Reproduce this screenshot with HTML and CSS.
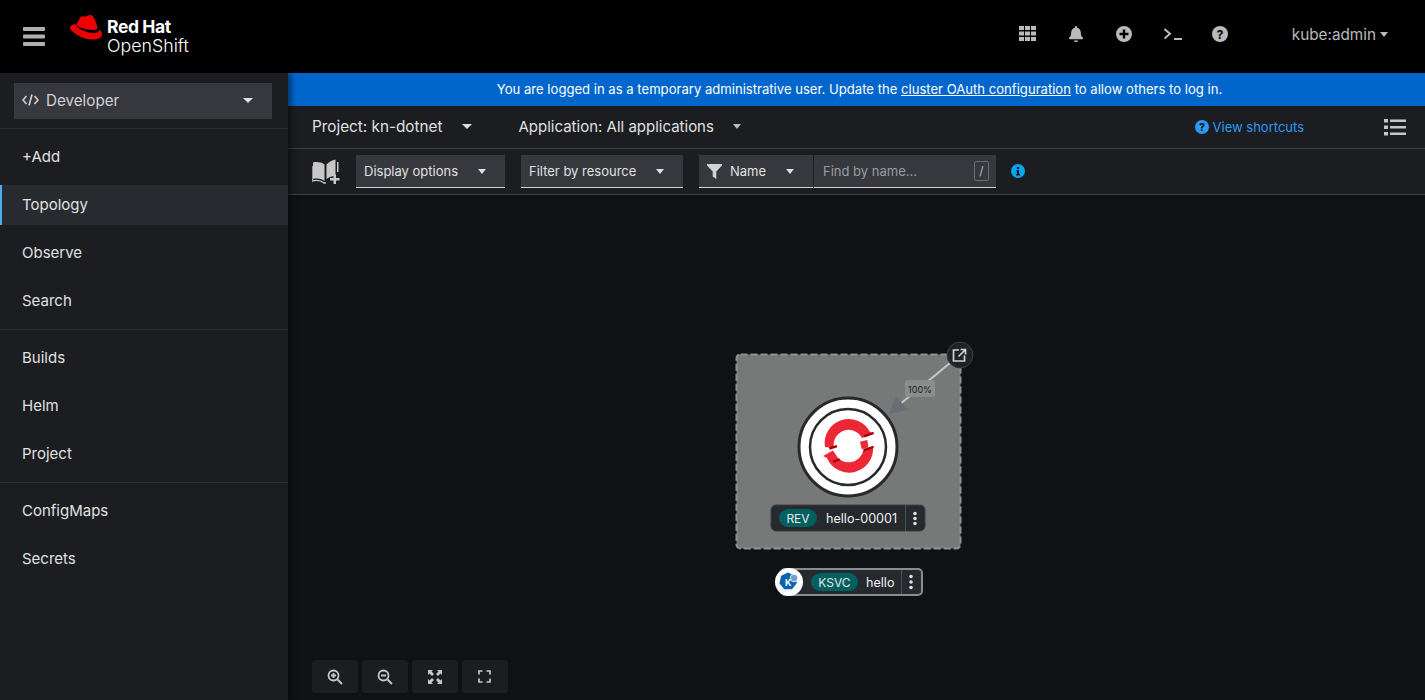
FILE: index.html
```html
<!DOCTYPE html>
<html lang="en">
<head>
<meta charset="utf-8">
<title>Topology - Red Hat OpenShift</title>
<link rel="stylesheet" href="styles.css">
</head>
<body>

<header class="masthead">
  <svg class="burger" width="22" height="20" viewBox="0 0 22 20"><rect y="0" width="22" height="4" rx="1"/><rect y="7.500" width="22" height="4" rx="1"/><rect y="15" width="22" height="4" rx="1"/></svg>
  <div class="brand">
    <svg class="hat" width="34" height="27" viewBox="0 0 34 27">
      <path fill="#e00" d="M7 11 11.500 3C12.500 1.500 14 2.500 16 2.500 18 2.500 19.500.8 21.500 1 23.500 1.300 25 3.500 26 6L28.500 13C29 15 27 16 24 16 17 16 9 13 7 11Z"/>
      <path fill="#e00" d="M6 10C4 10.500 1 11.500 1 13.500 1 17.500 13 25.500 24 25.500 30 25.500 33 23 33 20 33 18.500 32 16.500 30 15.500 30.500 18 28 19 25 19 17 19 8 14.500 6 10Z"/>
    </svg>
    <div class="brand-text"><b>Red Hat</b><span>OpenShift</span></div>
  </div>
  <div class="mast-tools">
    <svg class="mast-icon" width="17" height="16" viewBox="0 0 17 16"><path d="M0 0h5v4H0zM6 0h5v4H6zM12 0h5v4h-5zM0 5.500h5v4H0zM6 5.500h5v4H6zM12 5.500h5v4h-5zM0 11h5v4H0zM6 11h5v4H6zM12 11h5v4h-5z"/></svg>
    <svg class="mast-icon" width="14" height="16" viewBox="0 0 14 16"><path d="M7 0c.7 0 1.100.5 1.100 1.100v.6c2.300.5 3.700 2.300 3.700 4.700 0 3.300 1.100 4.300 2 5.200.2.200.2.400.2.700 0 .5-.4 1-1 1H1c-.6 0-1-.5-1-1 0-.3 0-.5.200-.7.900-.9 2-1.900 2-5.200 0-2.400 1.400-4.200 3.700-4.700v-.6C5.900.5 6.300 0 7 0zM5 14.500h4c0 1-.9 1.500-2 1.500s-2-.5-2-1.500z"/></svg>
    <svg class="mast-icon" width="16" height="16" viewBox="0 0 16 16"><path fill-rule="evenodd" d="M8 0a8 8 0 1 1 0 16A8 8 0 0 1 8 0zM6.800 3.500v3.300H3.500v2.400h3.300v3.300h2.400V9.200h3.300V6.800H9.200V3.500z"/></svg>
    <svg class="mast-icon" width="18" height="12" viewBox="0 0 18 12"><path d="M.500 1 6 5.800.500 10.600" fill="none" stroke="#b8bbbe" stroke-width="2"/><rect x="10" y="10" width="8" height="2"/></svg>
    <svg class="mast-icon" width="16" height="16" viewBox="0 0 16 16"><circle cx="8" cy="8" r="8"/><text x="8" y="12.500" class="glyph-dark">?</text></svg>
    <div class="user">kube:admin<i class="caret user-caret"></i></div>
  </div>
</header>

<div class="below">
  <nav class="sidebar">
    <div class="perspective">
      <div class="perspective-btn">
        <svg class="code-icon" width="17" height="12" viewBox="0 0 17 12"><path d="M4.500 2 1 6l3.500 4M12.500 2 16 6l-3.500 4M10 .5 7 11.500" fill="none" stroke="#d2d2d2" stroke-width="1.600"/></svg>
        <span>Developer</span>
        <i class="caret"></i>
      </div>
    </div>
    <div class="nav-group">
      <a class="nav-item">+Add</a>
      <a class="nav-item current">Topology</a>
      <a class="nav-item">Observe</a>
      <a class="nav-item">Search</a>
    </div>
    <div class="nav-group">
      <a class="nav-item">Builds</a>
      <a class="nav-item">Helm</a>
      <a class="nav-item">Project</a>
    </div>
    <div class="nav-group last">
      <a class="nav-item">ConfigMaps</a>
      <a class="nav-item">Secrets</a>
    </div>
  </nav>

  <main class="main">
    <div class="banner"><span>You are logged in as a temporary administrative user. Update the <a href="#">cluster OAuth configuration</a> to allow others to log in.</span></div>

    <div class="project-bar">
      <div class="scope">Project: kn-dotnet<i class="caret"></i></div>
      <div class="scope app">Application: All applications<i class="caret dim"></i></div>
      <div class="shortcuts">
        <svg width="14" height="14" viewBox="0 0 16 16"><circle cx="8" cy="8" r="8" fill="#2b9af3"/><text x="8" y="12.500" class="glyph-dark">?</text></svg>
        View shortcuts
      </div>
      <svg class="list-icon" width="22" height="17" viewBox="0 0 22 17"><path d="M0 0h4v3.500H0zM6 .500h16v2.500H6zM0 6.500h4V10H0zM6 7h16v2.500H6zM0 13h4v3.500H0zM6 13.500h16V16H6z"/></svg>
    </div>

    <div class="filter-bar">
      <svg class="book" width="28" height="26" viewBox="0 0 28 26">
        <path fill="#c7c7c7" d="M1 5 1 20c4-1 8-.5 11.500 2V5.500C9 3 5 2.500 1 3.500zM14.500 5.500V20C17 18 20 17 23.500 17V.5C20 1 17 3 14.500 5.500zM25 3h1.500v10H25z"/>
        <path d="M0 7v15c4-1 9-.5 12 2h2" fill="none" stroke="#c7c7c7" stroke-width="1.400"/>
        <path fill="#c7c7c7" d="M21.500 16.500h2.500v3.500h3.500v2.500H24V26h-2.500v-3.500H18V20h3.500z" transform="translate(0 -1)"/>
      </svg>
      <div class="select opts">Display options<i class="caret"></i></div>
      <div class="select res">Filter by resource<i class="caret"></i></div>
      <div class="search-group">
        <div class="select name">
          <svg width="15" height="15" viewBox="0 0 15 15"><path fill="#d2d2d2" d="M0 0h15v1.500L9.300 7.500v7.500L5.700 12.500v-5L0 1.500z"/></svg>
          Name<i class="caret"></i>
        </div>
        <div class="find">Find by name...<kbd>/</kbd></div>
      </div>
      <svg class="info" width="14" height="14" viewBox="0 0 16 16"><circle cx="8" cy="8" r="8" fill="#06a6ef"/><circle cx="8" cy="4.500" r="1.500" fill="#14161a"/><path fill="#14161a" d="M6 7h3.200v4.500H10.300V13H5.900v-1.500h1v-3H6z"/></svg>
    </div>

    <section class="canvas">
      <svg class="graph" viewBox="288 195 1137 505" width="1137" height="505">
        <!-- group -->
        <rect x="736.500" y="354.500" width="224" height="194" rx="4" class="group"/>

        <!-- edge -->
        <line x1="950" y1="363" x2="899" y2="405" class="edge"/>
        <path d="M889 414 896 396 908 410z" fill="#6a6e73"/>
        <rect x="905" y="380" width="30" height="17" rx="2" fill="#8a8d8d"/>
        <text x="920" y="392.500" class="edge-label">100%</text>
        <circle cx="960" cy="355" r="13" fill="#202226" stroke="#3c3f42"/>
        <path d="M959 350h-5.500v11h11v-5.500M958.500 356.500 965 350M960.500 349.500h5v5" fill="none" stroke="#d2d2d2" stroke-width="1.700"/>

        <!-- revision node -->
        <circle cx="848" cy="447" r="49" fill="#fff" stroke="#26292d" stroke-width="3"/>
        <circle cx="848" cy="447" r="38" fill="#fff" stroke="#26292d" stroke-width="2.500"/>
        <path d="M825 447A24 24 0 0 1 870 432L873 433.500 862 438A15 15 0 0 0 834 448Z" fill="#ee2737"/>
        <path d="M823 456 833 450.500 835 453.500A15 15 0 0 0 863.500 449.500L873 446.500A24 24 0 0 1 827 458Z" fill="#ee2737"/>
        <path d="M860 441.700 867.300 440 868.300 447.300 861.700 449.300Z" fill="#ee2737"/>
        <path d="M864 435 873.300 431.700 874 434 864.500 437.500ZM863.300 449 873.300 445.700 873.800 448 864 451.300ZM829 447.300 836.700 445 837.300 447.300 829.700 449.700ZM832.700 460.700 839.300 458.300 840 460.300 833.700 462.700Z" fill="#a30000"/>

        <!-- revision label -->
        <rect x="771" y="505" width="154" height="26" rx="5" class="label-bg"/>
        <rect x="779" y="509" width="38" height="18" rx="9" class="badge"/>
        <text x="798" y="522.500" class="badge-text">REV</text>
        <text x="826" y="523" class="label-text">hello-00001</text>
        <line x1="905.500" y1="505" x2="905.500" y2="531" class="divider"/>
        <g class="kebab"><circle cx="915" cy="513.500" r="1.800"/><circle cx="915" cy="518.500" r="1.800"/><circle cx="915" cy="523.500" r="1.800"/></g>

        <!-- service label -->
        <rect x="781" y="569" width="141" height="26" rx="4" class="label-bg service"/>
        <circle cx="789" cy="582" r="14" fill="#fff"/>
        <path d="M788 572.500l7 3.200 1.800 7.500-4.800 6h-7.800l-4.800-6 1.800-7.500z" fill="#0865ad"/>
        <circle cx="794" cy="578" r="3.800" fill="#6e9fca" stroke="#fff" stroke-width=".8"/>
        <text x="785" y="586" class="knative">K</text>
        <rect x="811" y="573" width="47" height="18" rx="9" class="badge"/>
        <text x="834.500" y="586.500" class="badge-text">KSVC</text>
        <text x="866" y="587" class="label-text">hello</text>
        <line x1="901.500" y1="570" x2="901.500" y2="594" class="divider"/>
        <g class="kebab"><circle cx="911" cy="576.500" r="1.800"/><circle cx="911" cy="582" r="1.800"/><circle cx="911" cy="587.500" r="1.800"/></g>
      </svg>

      <div class="zoom-tools">
        <button class="tool"><svg width="16" height="16" viewBox="0 0 16 16"><circle cx="6.500" cy="6.500" r="5" class="zoom-ring"/><path d="M10.500 10.500 15 15M6.500 4v5M4 6.500h5" class="zoom-ring"/></svg></button>
        <button class="tool"><svg width="16" height="16" viewBox="0 0 16 16"><circle cx="6.500" cy="6.500" r="5" class="zoom-ring"/><path d="M10.500 10.500 15 15M4 6.500h5" class="zoom-ring"/></svg></button>
        <button class="tool"><svg width="14" height="14" viewBox="0 0 14 14"><path fill="#c7c7c7" d="M0 0h5L3.500 1.500 6 4 4 6 1.500 3.500 0 5zM14 0v5l-1.500-1.500L10 6 8 4l2.500-2.500L9 0zM0 14V9l1.500 1.500L4 8l2 2-2.500 2.500L5 14zM14 14H9l1.500-1.500L8 10l2-2 2.500 2.500L14 9z"/></svg></button>
        <button class="tool tool-fit"><svg width="13" height="13" viewBox="0 0 13 13"><path d="M1 4.500V1h3.500M8.500 1H12v3.500M1 8.500V12h3.500M8.500 12H12V8.500" fill="none" stroke="#c7c7c7" stroke-width="1.700"/></svg></button>
      </div>
    </section>
  </main>
</div>

</body>
</html>
```

FILE: styles.css
```css
* { box-sizing: border-box; }

html, body { height: 100%; }

body {
  margin: 0;
  overflow: hidden;
  display: flex;
  flex-direction: column;
  background: #0f1214;
  color: #e0e0e0;
  font-family: "Inter", "Noto Sans", sans-serif;
  font-size: 15px;
}

.caret {
  display: inline-block;
  width: 0;
  height: 0;
  border-left: 4.500px solid transparent;
  border-right: 4.500px solid transparent;
  border-top: 5px solid #e0e0e0;
}
.caret.dim { border-top-color: #b8bbbe; }

/* masthead */
.masthead {
  height: 73px;
  flex: none;
  background: #000;
  display: flex;
  align-items: center;
  padding-left: 23px;
}
.burger { fill: #b0b0b0; margin-top: 1px; }
.brand { display: flex; margin-left: 24px; margin-top: -2px; }
.hat { margin-top: -3px; margin-right: 1px; align-self: flex-start; }
.brand-text {
  display: flex;
  flex-direction: column;
  margin-left: 3px;
  color: #fff;
  line-height: 19px;
}
.brand-text b { font-size: 17.500px; font-weight: 700; letter-spacing: -0.4px; }
.brand-text span { font-size: 17.800px; font-weight: 300; }

.mast-tools {
  margin-left: auto;
  display: flex;
  align-items: center;
  padding-right: 37px;
  margin-top: -5px;
}
.mast-icon { fill: #b8bbbe; margin-right: 32px; }
.mast-icon:nth-child(1) { margin-right: 34px; }
.mast-icon:nth-child(2) { margin-left: -1px; margin-right: 33px; }
.mast-icon:nth-child(4) { margin-right: 30px; }
.glyph-dark {
  fill: #14161a;
  font-size: 12px;
  font-weight: 800;
  text-anchor: middle;
}
.user {
  margin-left: 32px;
  display: flex;
  align-items: center;
  font-size: 15.300px;
  color: #b8bbbe;
}
.user-caret { margin-left: 4px; border-top-color: #b8bbbe; }

/* sidebar */
.below { flex: 1; display: flex; min-height: 0; }

.sidebar {
  width: 288px;
  flex: none;
  background: #1b1d21;
  box-shadow: 3px 0 6px rgba(0, 0, 0, 0.5);
  position: relative;
  z-index: 2;
}
.perspective {
  height: 56px;
  padding: 10px 16px 9px 14px;
  border-bottom: 1px solid #2c2f33;
}
.perspective-btn {
  height: 36px;
  background: #36383d;
  display: flex;
  align-items: center;
  padding: 0 19px 2px 8px;
  color: #d2d2d2;
}
.perspective-btn span { margin-left: 7px; font-size: 15.200px; }
.perspective-btn .caret {
  margin-left: auto;
  border-left-width: 5px;
  border-right-width: 5px;
}
.code-icon { flex: none; }

.nav-group { padding: 3px 0 5px; border-bottom: 1px solid #2c2f33; }
.nav-group.last { border-bottom: 0; }
.nav-item {
  display: flex;
  align-items: center;
  height: 48px;
  padding-left: 22px;
  font-size: 15px;
  color: #e0e0e0;
}
.nav-item.current {
  height: 40px;
  margin: 5px 0 3px;
  padding: 0 0 2px 20px;
  background: #272a2e;
  border-left: 2px solid #4fa9ee;
}

/* main column */
.main { flex: 1; min-width: 0; display: flex; flex-direction: column; }

.banner {
  height: 33px;
  flex: none;
  background: #06c;
  color: #fff;
  font-size: 13.100px;
  display: flex;
  align-items: center;
  justify-content: center;
  padding: 0 0 2px 6px;
}
.banner a { color: #fff; }

.project-bar {
  height: 43px;
  flex: none;
  background: #1b1d21;
  border-bottom: 1px solid #3c3f42;
  display: flex;
  align-items: center;
  padding: 0 19px 2px 24px;
  font-size: 15px;
}
.scope { display: flex; align-items: center; color: #e0e0e0; }
.scope:first-child { font-size: 15.300px; }
.scope .caret { margin-left: 19px; }
.scope:first-child .caret { border-left-width: 5px; border-right-width: 5px; }
.scope.app { margin-left: 47px; }
.shortcuts {
  margin-left: auto;
  display: flex;
  align-items: center;
  gap: 4px;
  color: #2b9af3;
  font-size: 13px;
  padding-top: 2px;
}
.list-icon { fill: #c7c7c7; margin-left: 80px; margin-top: 2px; }

.filter-bar {
  height: 46px;
  flex: none;
  background: #1b1d21;
  border-bottom: 1px solid #3c3f42;
  display: flex;
  align-items: center;
  padding-left: 24px;
}
.book { flex: none; margin-right: 16px; }
.select {
  height: 33px;
  background: #36383d;
  border-bottom: 1px solid #d2d2d2;
  display: flex;
  align-items: center;
  padding: 0 8px;
  font-size: 13px;
  color: #e0e0e0;
}
.select .caret { margin-left: auto; margin-right: 11px; }
.opts { width: 149px; }
.res { width: 162px; margin-left: 16px; }
.search-group { display: flex; margin-left: 16px; }
.name { width: 114px; gap: 8px; }
.find {
  width: 182px;
  height: 33px;
  margin-left: 1px;
  background: #36383d;
  border-bottom: 1px solid #d2d2d2;
  display: flex;
  align-items: center;
  justify-content: space-between;
  padding: 0 7px 0 9px;
  font-size: 13px;
  color: #9a9da0;
}
kbd {
  width: 15px;
  height: 20px;
  border: 1px solid #6a6e73;
  border-radius: 2px;
  text-align: center;
  font: 12px/18px "Inter", sans-serif;
  color: #b8bbbe;
}
.info { margin-left: 15px; margin-bottom: 2px; }

/* topology canvas */
.canvas {
  flex: 1;
  position: relative;
  background: #0f1214;
  display: flex;
  align-items: flex-end;
  padding: 0 0 7px 24px;
}
.graph { position: absolute; left: 0; top: 0; }
.group { fill: #777978; stroke: #8f9292; stroke-width: 2; stroke-dasharray: 7 3; }
.edge { stroke: #c7c7c7; stroke-width: 2; }
.edge-label { fill: #1b1d21; font-size: 9px; text-anchor: middle; }
.label-bg { fill: #26292d; stroke: #3c3f42; }
.label-bg.service { stroke: #8a8d90; stroke-width: 2; }
.badge { fill: #005f60; }
.badge-text { fill: #e8e8e8; font-size: 12px; text-anchor: middle; }
.label-text { fill: #f0f0f0; font-size: 12.600px; }
.divider { stroke: #4f5255; }
.kebab { fill: #e0e0e0; }
.knative { fill: #fff; font-size: 9px; font-weight: 700; }

.zoom-tools { display: flex; gap: 4px; position: relative; }
.tool {
  width: 46px;
  height: 33px;
  padding: 0;
  border: 0;
  border-radius: 3px;
  background: #1b1d21;
  display: flex;
  align-items: center;
  justify-content: center;
}
.tool-fit { padding-right: 2px; }
.zoom-ring { fill: none; stroke: #c7c7c7; stroke-width: 1.800; }
```
